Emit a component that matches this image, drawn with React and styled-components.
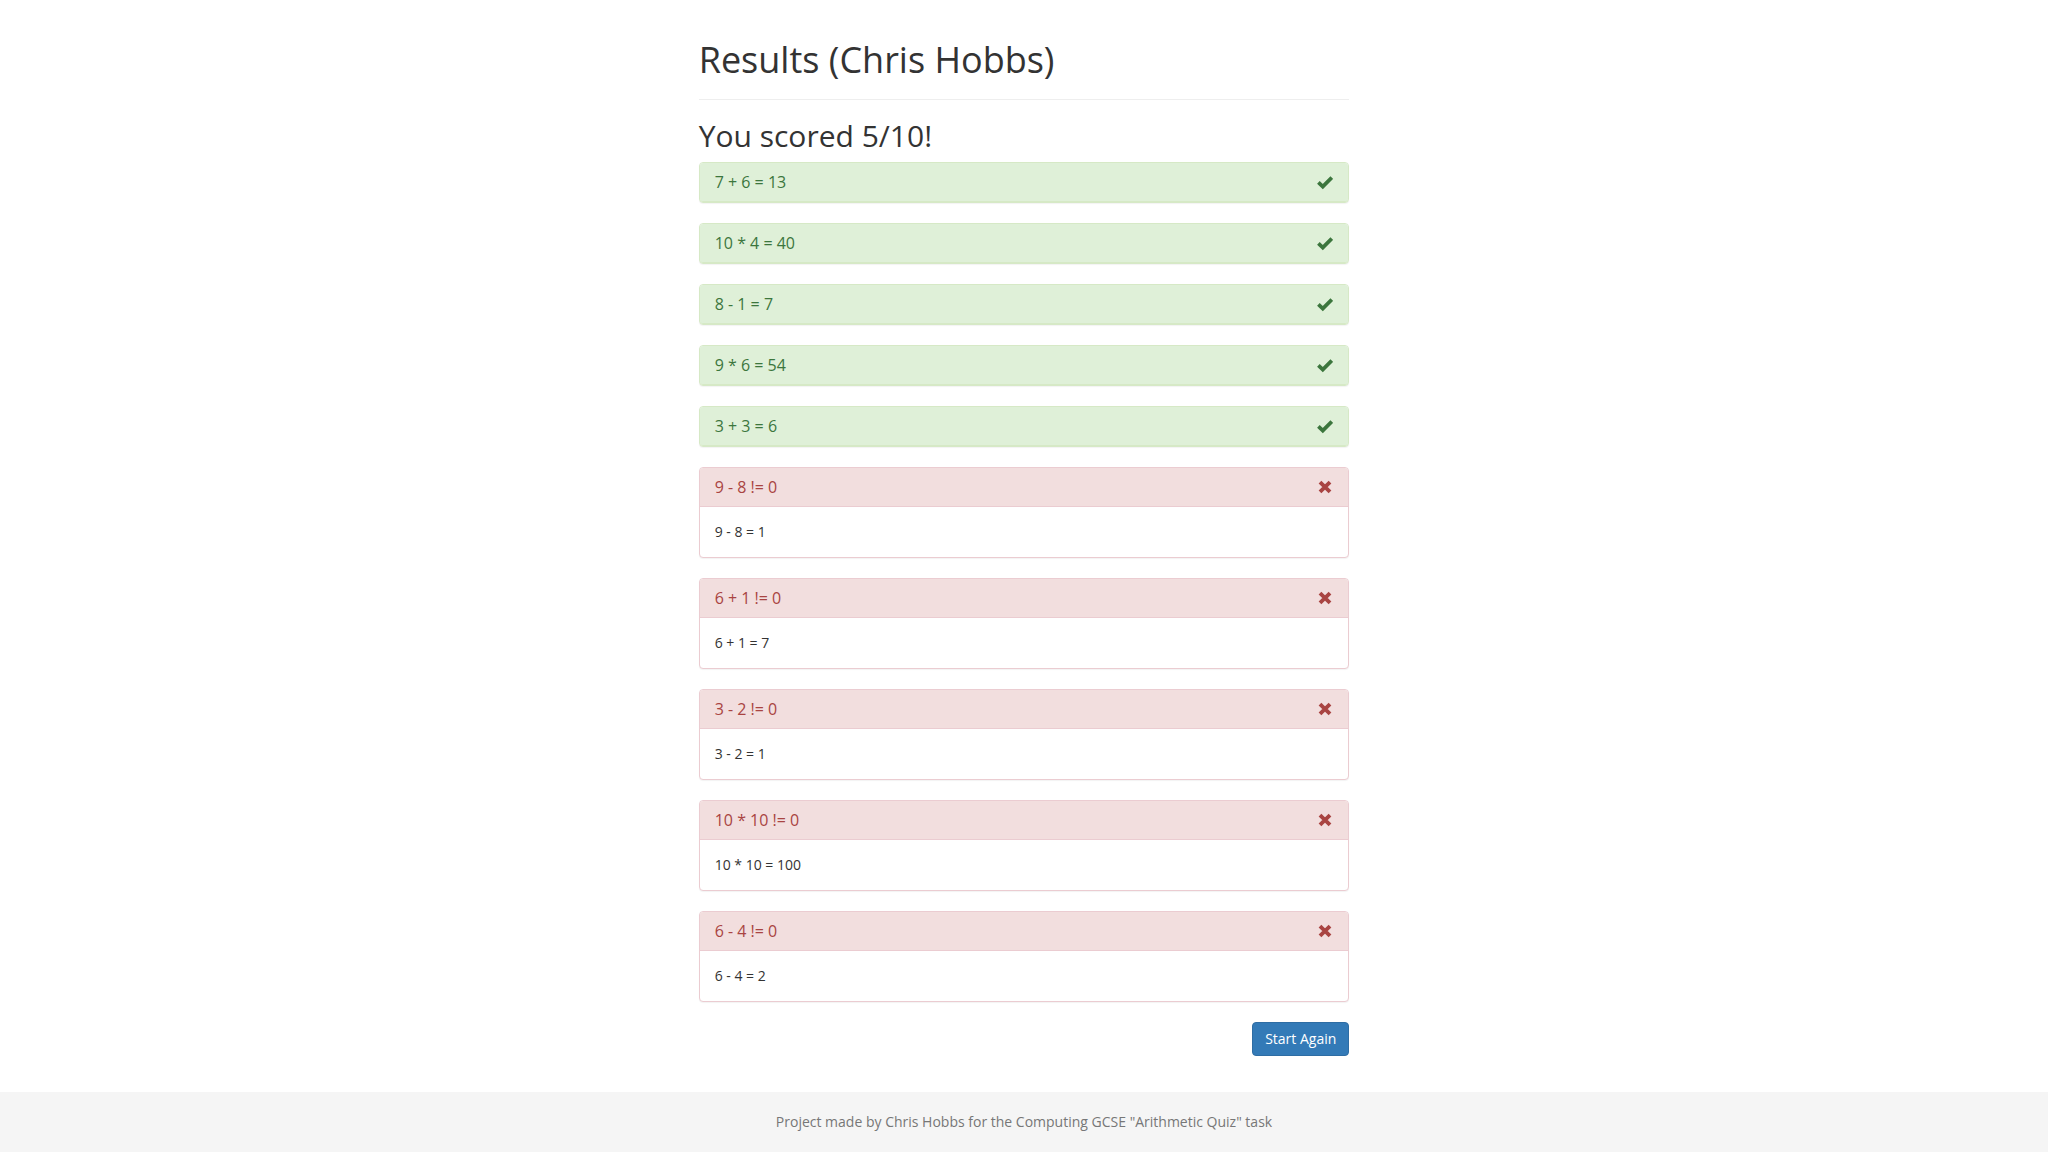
import React from 'react';
import styled, { createGlobalStyle } from 'styled-components';

const results = [
  { q: '7 + 6', answer: 13, given: 13 },
  { q: '10 * 4', answer: 40, given: 40 },
  { q: '8 - 1', answer: 7, given: 7 },
  { q: '9 * 6', answer: 54, given: 54 },
  { q: '3 + 3', answer: 6, given: 6 },
  { q: '9 - 8', answer: 1, given: 0 },
  { q: '6 + 1', answer: 7, given: 0 },
  { q: '3 - 2', answer: 1, given: 0 },
  { q: '10 * 10', answer: 100, given: 0 },
  { q: '6 - 4', answer: 2, given: 0 },
];

const GlobalStyle = createGlobalStyle`
  * {
    box-sizing: border-box;
  }
  body {
    margin: 0;
    font-family: "Open Sans", "Liberation Sans", sans-serif;
    font-size: 14px;
    line-height: 1.42857;
    color: #333;
    background: #fff;
  }
`;

// green tick / red cross, like the glyphicons //
const OkIcon = () => (
  <svg width="16" height="16" viewBox="0 0 16 16">
    <polyline
      points="1.4,8.4 5.8,12.6 14.8,3.6"
      fill="none"
      stroke="currentColor"
      strokeWidth="3.8"
    />
  </svg>
);

const RemoveIcon = () => (
  <svg width="16" height="16" viewBox="0 0 16 16">
    <path
      d="M3 3.2 L13 12.8 M13 3.2 L3 12.8"
      fill="none"
      stroke="currentColor"
      strokeWidth="3.9"
    />
  </svg>
);

const App = () => {
  const score = results.filter((r) => r.answer === r.given).length;

  return (
    <>
      <GlobalStyle />
      <StyledPage>
        <StyledColumn>
          <StyledHeader>
            <StyledH1>Results (Chris Hobbs)</StyledH1>
          </StyledHeader>
          <StyledH2>
            You scored {score}/{results.length}!
          </StyledH2>
          {results.map((r, index) => {
            const correct = r.answer === r.given;
            return (
              <StyledPanel key={index} $correct={correct}>
                <StyledHeading $correct={correct} $alone={correct}>
                  <StyledTitle>
                    {correct
                      ? `${r.q} = ${r.given}`
                      : `${r.q} != ${r.given}`}
                  </StyledTitle>
                  {correct ? <OkIcon /> : <RemoveIcon />}
                </StyledHeading>
                {!correct && (
                  <StyledBody>
                    {r.q} = {r.answer}
                  </StyledBody>
                )}
              </StyledPanel>
            );
          })}
          <StyledActions>
            <StyledButton>Start Again</StyledButton>
          </StyledActions>
        </StyledColumn>
        <StyledFooter>
          <StyledFooterText>
            Project made by Chris Hobbs for the Computing GCSE "Arithmetic
            Quiz" task
          </StyledFooterText>
        </StyledFooter>
      </StyledPage>
    </>
  );
};

const StyledPage = styled.div`
  min-height: 100vh;
  display: flex;
  flex-direction: column;
`;

const StyledColumn = styled.div`
  width: calc(100% / 3);
  margin: 0 auto;
  padding: 40px 16px 0;
`;

const StyledHeader = styled.div`
  padding-bottom: 19px;
  border-bottom: 1px solid #eee;
`;

const StyledH1 = styled.h1`
  margin: 0;
  font-size: 36px;
  font-weight: 400;
  line-height: 1.1;
  color: #333;
`;

const StyledH2 = styled.h2`
  margin: 19px 0 10px;
  font-size: 30px;
  font-weight: 400;
  line-height: 1.1;
  color: #333;
`;

const StyledPanel = styled.div`
  margin-bottom: 20px;
  background: #fff;
  border: 1px solid ${(p) => (p.$correct ? '#d6e9c6' : '#ebccd1')};
  border-radius: 4px;
  box-shadow: 0 1px 1px rgba(0, 0, 0, 0.05);
`;

const StyledHeading = styled.div`
  display: flex;
  align-items: center;
  justify-content: space-between;
  padding: 10px 15px;
  color: ${(p) => (p.$correct ? '#3c763d' : '#a94442')};
  background: ${(p) => (p.$correct ? '#dff0d8' : '#f2dede')};
  border-bottom: 1px solid ${(p) => (p.$correct ? '#d6e9c6' : '#ebccd1')};
  border-radius: ${(p) => (p.$alone ? '3px' : '3px 3px 0 0')};
`;

const StyledTitle = styled.h3`
  margin: 0;
  font-size: 16px;
  font-weight: 400;
  line-height: 18px;
`;

const StyledBody = styled.div`
  padding: 15px;
  color: #333;
`;

const StyledActions = styled.div`
  display: flex;
  justify-content: flex-end;
`;

const StyledButton = styled.button`
  padding: 6px 12px;
  font-family: inherit;
  font-size: 14px;
  line-height: 1.42857;
  color: #fff;
  background: #337ab7;
  border: 1px solid #2e6da4;
  border-radius: 4px;
  cursor: pointer;
`;

const StyledFooter = styled.footer`
  margin-top: auto;
  height: 60px;
  background: #f5f5f5;
  text-align: center;
`;

const StyledFooterText = styled.p`
  margin: 20px 0;
  color: #777;
`;

export default App;
